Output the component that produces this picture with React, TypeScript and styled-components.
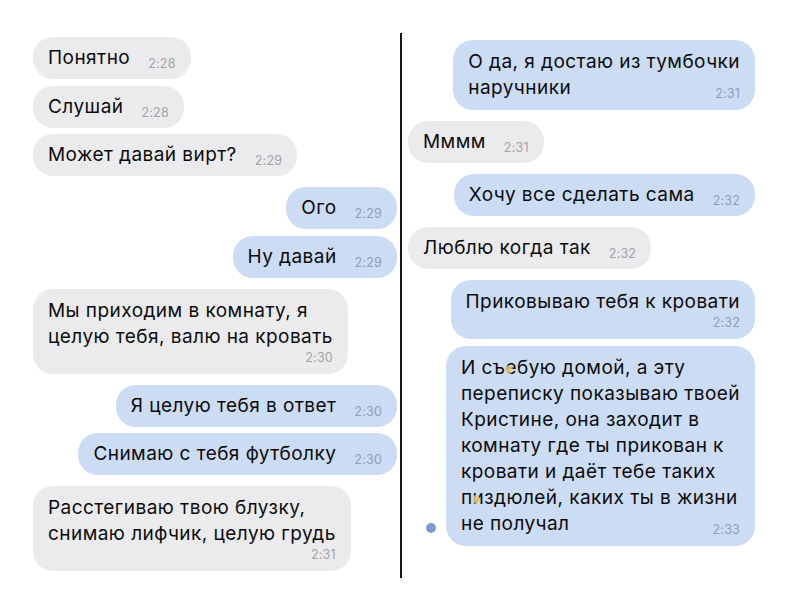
import React from "react";
import styled, { createGlobalStyle } from "styled-components";

type Side = "in" | "out";

interface Message {
  side: Side;
  lines: React.ReactNode[];
  time: string;
  timeBelow?: boolean; // время отдельной строкой под текстом
  unread?: boolean;
}

const GlobalStyle = createGlobalStyle`
  html, body {
    margin: 0;
    padding: 0;
    background: #ffffff;
  }
  body {
    font-family: Inter, Roboto, "Liberation Sans", Arial, sans-serif;
    color: #0b0b0c;
    -webkit-font-smoothing: antialiased;
  }
`;

const Page = styled.div`
  display: flex;
  align-items: flex-start;
  width: 800px;
  height: 592px;
  overflow: hidden;
  background: #fff;
`;

const Column = styled.div<{ $top: number; $left: number; $right: number; $width?: number }>`
  display: flex;
  flex-direction: column;
  box-sizing: border-box;
  ${({ $width }) => ($width ? `width: ${$width}px;` : "flex: 1;")}
  padding: ${({ $top, $left, $right }) => `${$top}px ${$right}px 0 ${$left}px`};
`;

const Divider = styled.div`
  flex-shrink: 0;
  width: 2px;
  height: 545px;
  margin-top: 33px;
  background: #151515;
`;

const Row = styled.div<{ $side: Side; $switch: boolean; $first: boolean }>`
  display: flex;
  justify-content: ${({ $side }) => ($side === "out" ? "flex-end" : "flex-start")};
  margin-top: ${({ $first, $switch }) => ($first ? 0 : $switch ? 11 : 6.5)}px;
`;

const Bubble = styled.div<{ $side: Side; $multi: boolean }>`
  position: relative;
  box-sizing: border-box;
  padding: ${({ $multi }) => ($multi ? "9px 15px" : "8px 15px")};
  border-radius: 20px;
  background: ${({ $side }) => ($side === "out" ? "#ccdcf4" : "#ebebed")};
  font-size: 19px;
  line-height: 26px;
  letter-spacing: 0.45px;
`;

const Line = styled.div`
  white-space: nowrap;
`;

const LastLine = styled.div`
  display: flex;
  align-items: flex-end;
  justify-content: space-between;
  gap: 18px;
  white-space: nowrap;
`;

const Time = styled.span<{ $side: Side }>`
  flex-shrink: 0;
  font-size: 12.5px;
  line-height: 14px;
  letter-spacing: 0.2px;
  color: ${({ $side }) => ($side === "out" ? "#8f9db3" : "#a2a2a7")};
`;

const TimeRow = styled.div`
  display: flex;
  justify-content: flex-end;
  height: 15px;
  padding-top: 1px;
  box-sizing: border-box;
`;

// отметка непрочитанного слева от пузыря
const UnreadDot = styled.span`
  position: absolute;
  left: -20px;
  bottom: 13px;
  width: 10px;
  height: 10px;
  border-radius: 50%;
  background: #7f9dcc;
`;

// замазанная буква
const Blot = styled.span`
  position: relative;
  &::after {
    content: "";
    position: absolute;
    left: -1px;
    top: 9px;
    width: 8px;
    height: 9px;
    border-radius: 50%;
    background: radial-gradient(circle, rgba(236, 214, 120, 0.95) 0%, rgba(226, 206, 140, 0.7) 60%, rgba(226, 206, 140, 0) 100%);
  }
`;

const leftMessages: Message[] = [
  { side: "in", lines: ["Понятно"], time: "2:28" },
  { side: "in", lines: ["Слушай"], time: "2:28" },
  { side: "in", lines: ["Может давай вирт?"], time: "2:29" },
  { side: "out", lines: ["Ого"], time: "2:29" },
  { side: "out", lines: ["Ну давай"], time: "2:29" },
  { side: "in", lines: ["Мы приходим в комнату, я", "целую тебя, валю на кровать"], time: "2:30", timeBelow: true },
  { side: "out", lines: ["Я целую тебя в ответ"], time: "2:30" },
  { side: "out", lines: ["Снимаю с тебя футболку"], time: "2:30" },
  { side: "in", lines: ["Расстегиваю твою блузку,", "снимаю лифчик, целую грудь"], time: "2:31", timeBelow: true },
];

const rightMessages: Message[] = [
  { side: "out", lines: ["О да, я достаю из тумбочки", "наручники"], time: "2:31" },
  { side: "in", lines: ["Мммм"], time: "2:31" },
  { side: "out", lines: ["Хочу все сделать сама"], time: "2:32" },
  { side: "in", lines: ["Люблю когда так"], time: "2:32" },
  { side: "out", lines: ["Приковываю тебя к кровати"], time: "2:32", timeBelow: true },
  {
    side: "out",
    unread: true,
    time: "2:33",
    lines: [
      <>И съ<Blot>е</Blot>бую домой, а эту</>,
      "переписку показываю твоей",
      "Кристине, она заходит в",
      "комнату где ты прикован к",
      "кровати и даёт тебе таких",
      <>п<Blot>и</Blot>здюлей, каких ты в жизни</>,
      "не получал",
    ],
  },
];

const MessageBubble = ({ msg }: { msg: Message }) => {
  const multi = msg.lines.length > 1 || !!msg.timeBelow;
  const head = msg.timeBelow ? msg.lines : msg.lines.slice(0, -1);
  const last = msg.timeBelow ? null : msg.lines[msg.lines.length - 1];

  return (
    <Bubble $side={msg.side} $multi={multi}>
      {msg.unread && <UnreadDot />}
      {head.map((line, i) => (
        <Line key={i}>{line}</Line>
      ))}
      {last !== null && (
        <LastLine>
          <span>{last}</span>
          <Time $side={msg.side}>{msg.time}</Time>
        </LastLine>
      )}
      {msg.timeBelow && (
        <TimeRow>
          <Time $side={msg.side}>{msg.time}</Time>
        </TimeRow>
      )}
    </Bubble>
  );
};

const Thread = ({ messages }: { messages: Message[] }) => (
  <>
    {messages.map((msg, i) => (
      <Row
        key={i}
        $side={msg.side}
        $first={i === 0}
        $switch={i > 0 && messages[i - 1].side !== msg.side}
      >
        <MessageBubble msg={msg} />
      </Row>
    ))}
  </>
);

const App = () => {
  return (
    <>
      <GlobalStyle />
      <Page>
        <Column $width={400} $top={37} $left={33} $right={3}>
          <Thread messages={leftMessages} />
        </Column>
        <Divider />
        <Column $top={40} $left={6} $right={45}>
          <Thread messages={rightMessages} />
        </Column>
      </Page>
    </>
  );
};

export default App;
